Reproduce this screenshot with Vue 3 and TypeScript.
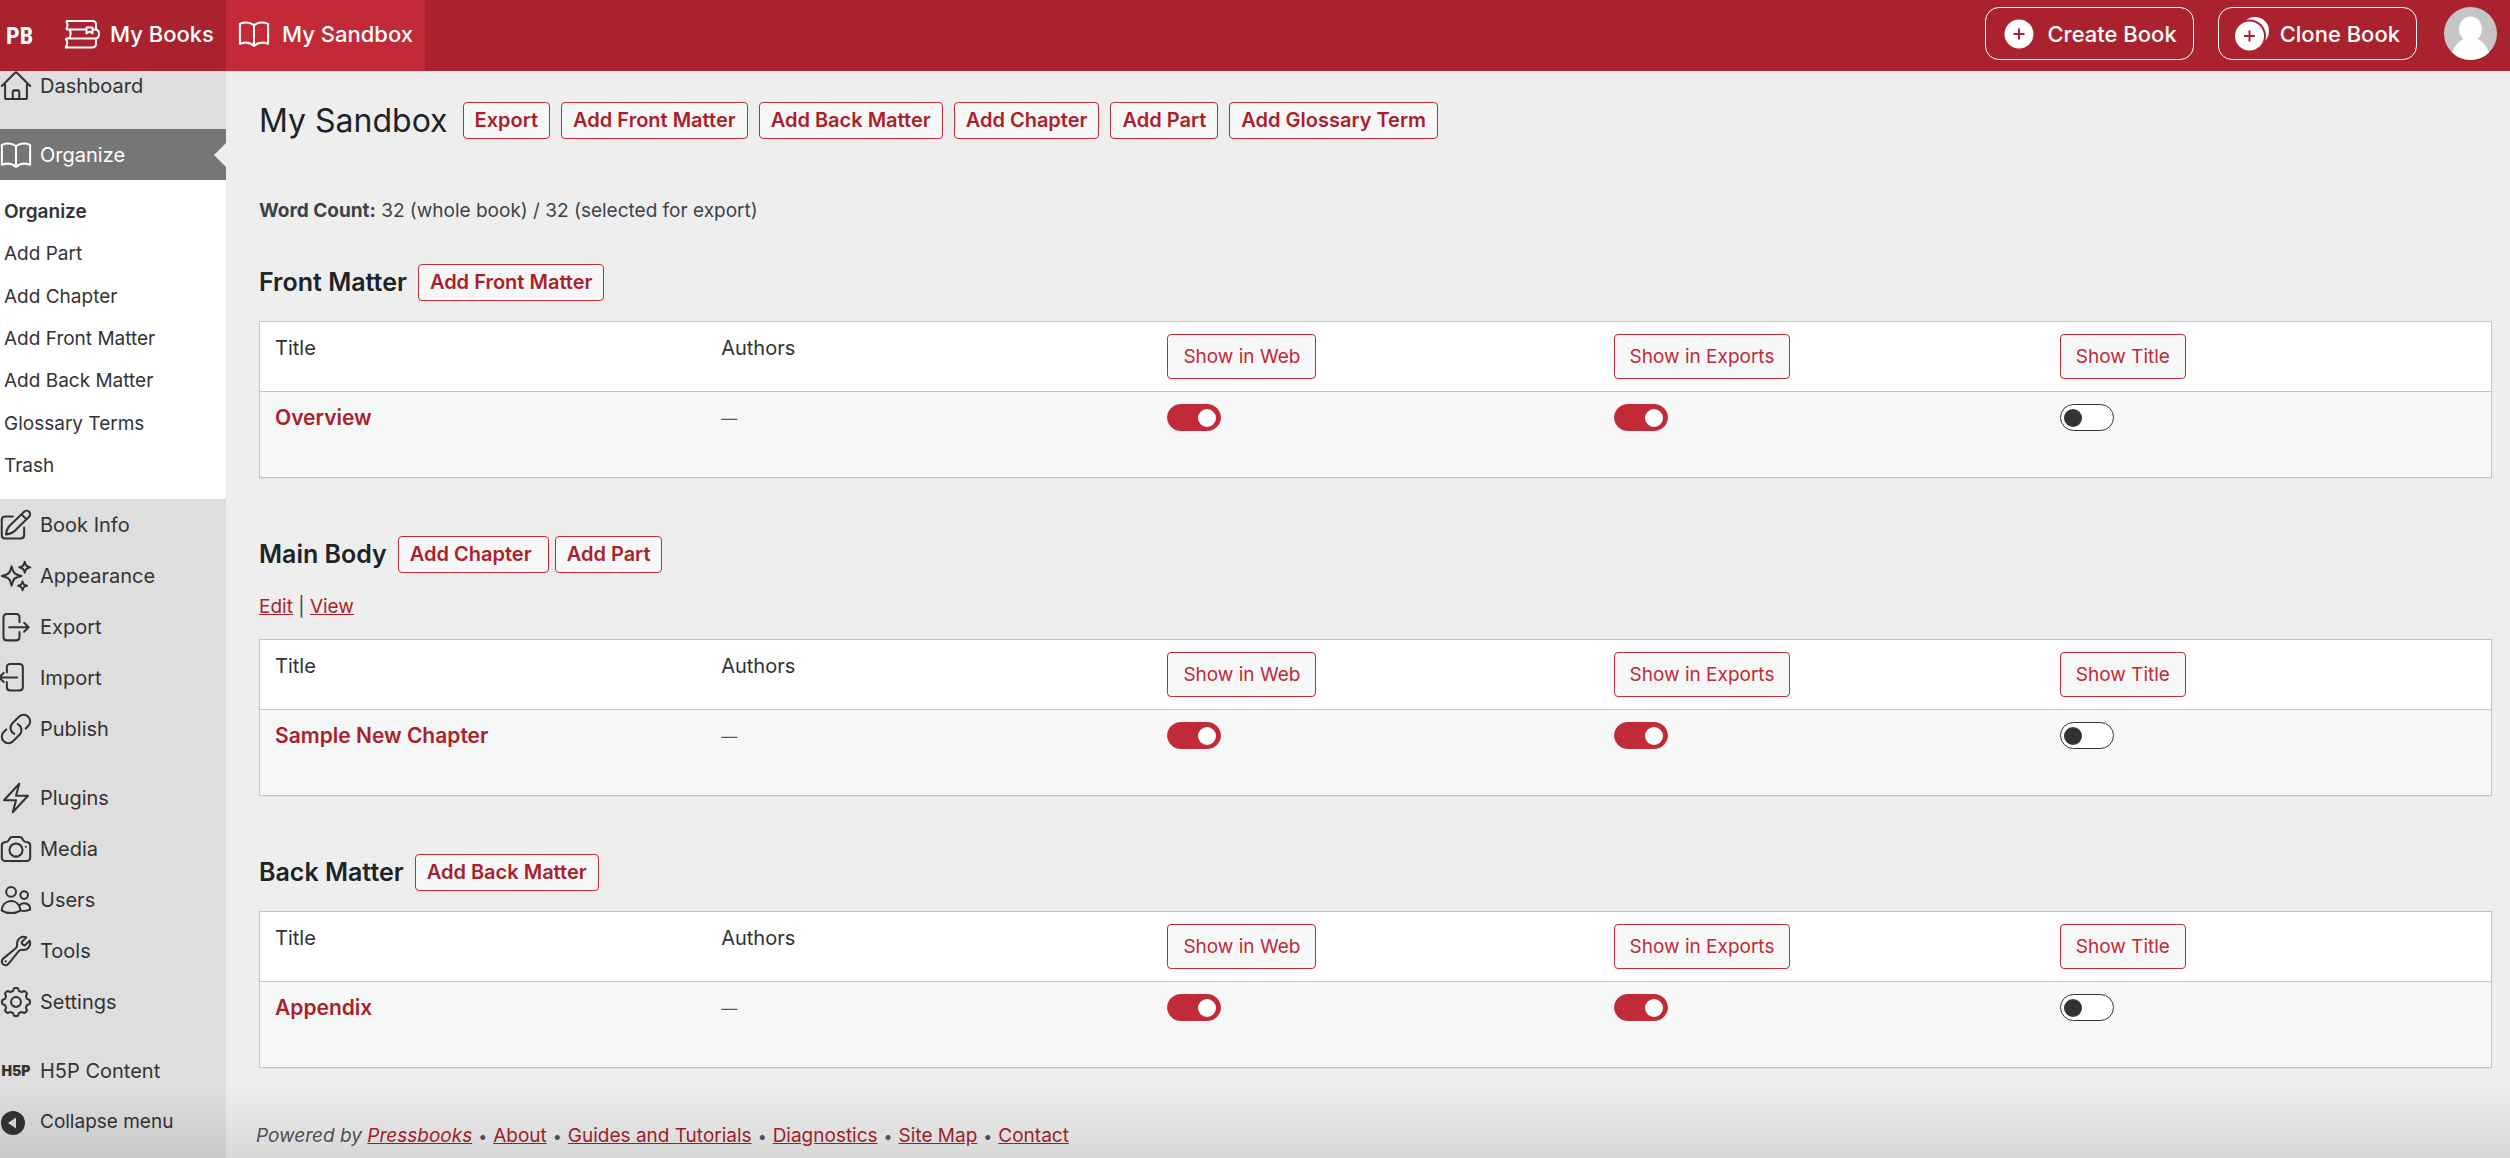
<script setup lang="ts">
import { reactive } from 'vue'

interface MenuItem {
  label: string
  icon: string
  gap?: boolean
  current?: boolean
}

interface Section {
  id: string
  heading: string
  actions: string[]
  partLinks?: boolean
  row: { title: string; web: boolean; exports: boolean; showTitle: boolean }
}

function gearPath(): string {
  const points: string[] = []
  for (let i = 0; i < 96; i++) {
    const angle = (i / 96) * Math.PI * 2
    const radius = 8.7 + 0.95 * Math.tanh(2.4 * Math.cos(8 * angle))
    points.push(`${(12 + radius * Math.sin(angle)).toFixed(2)} ${(12 - radius * Math.cos(angle)).toFixed(2)}`)
  }
  return `M${points.join('L')}Z M15.4 12a3.4 3.4 0 1 1-6.8 0 3.4 3.4 0 0 1 6.8 0Z`
}

const bookPath = 'M12 5.9V20.2M12 5.9C9.4 4 5.4 3.7 2.3 5V18.7C5.4 17.6 9.4 17.7 12 20.2C14.6 17.7 18.6 17.6 21.7 18.7V5C18.6 3.7 14.6 4 12 5.9Z'

const icons: Record<string, string> = {
  home: 'm2.25 12 8.954-8.955c.44-.439 1.152-.439 1.591 0L21.75 12M4.5 9.75v10.125c0 .621.504 1.125 1.125 1.125H9.75v-4.875c0-.621.504-1.125 1.125-1.125h2.25c.621 0 1.125.504 1.125 1.125V21h4.125c.621 0 1.125-.504 1.125-1.125V9.75M8.25 21h8.25',
  book: bookPath,
  edit: 'M9.8 6.2H4.6Q2.2 6.2 2.2 8.6V18.9Q2.2 21.3 4.6 21.3H15.2Q17.6 21.3 17.6 18.9V13.8M5.2 18.6C5.4 15.6 6.4 13.8 7.8 12.4L17.6 2.9a2.3 2.3 0 0 1 3.4 3.4L11.2 16C9.8 17.4 8 18.3 5.2 18.6ZM15.8 4.7l3.4 3.4',
  sparkles: 'M9.813 15.904 9 18.75l-.813-2.846a4.5 4.5 0 0 0-3.09-3.09L2.25 12l2.846-.813a4.5 4.5 0 0 0 3.09-3.09L9 5.25l.813 2.846a4.5 4.5 0 0 0 3.09 3.09L15.75 12l-2.846.813a4.5 4.5 0 0 0-3.09 3.09ZM18.259 8.715 18 9.75l-.259-1.035a3.375 3.375 0 0 0-2.455-2.456L14.25 6l1.036-.259a3.375 3.375 0 0 0 2.455-2.456L18 2.25l.259 1.035a3.375 3.375 0 0 0 2.456 2.456L21.75 6l-1.035.259a3.375 3.375 0 0 0-2.456 2.456ZM16.894 20.567 16.5 21.75l-.394-1.183a2.25 2.25 0 0 0-1.423-1.423L13.5 18.75l1.183-.394a2.25 2.25 0 0 0 1.423-1.423l.394-1.183.394 1.183a2.25 2.25 0 0 0 1.423 1.423l1.183.394-1.183.394a2.25 2.25 0 0 0-1.423 1.423Z',
  export: 'M14.4 8.8V5.4Q14.4 3 12 3H5.8Q3.4 3 3.4 5.4V18.8Q3.4 21.2 5.8 21.2H12Q14.4 21.2 14.4 18.8V15.4M7.3 12.2H20.7M17.6 9.1L20.7 12.2 17.6 15.3',
  import: 'M5.7 8.2V4.8Q5.7 2.4 8.1 2.4H14.3Q16.7 2.4 16.7 4.8V18.2Q16.7 20.6 14.3 20.6H8.1Q5.7 20.6 5.7 18.2V14.8M12.8 11.6H.4M3.5 8.5L.4 11.6 3.5 14.7',
  link: 'M13.19 8.688a4.5 4.5 0 0 1 1.242 7.244l-4.5 4.5a4.5 4.5 0 0 1-6.364-6.364l1.757-1.757m13.35-.622 1.757-1.757a4.5 4.5 0 0 0-6.364-6.364l-4.5 4.5a4.5 4.5 0 0 0 1.242 7.244',
  bolt: 'm3.75 13.5 10.5-11.25L12 10.5h8.25L9.75 21.75 12 13.5H3.75Z',
  camera: 'M6.827 6.175A2.31 2.31 0 0 1 5.186 7.23c-.38.054-.757.112-1.134.175C2.999 7.58 2.25 8.507 2.25 9.574V18a2.25 2.25 0 0 0 2.25 2.25h15A2.25 2.25 0 0 0 21.75 18V9.574c0-1.067-.75-1.994-1.802-2.169a47.865 47.865 0 0 0-1.134-.175 2.31 2.31 0 0 1-1.64-1.055l-.822-1.316a2.192 2.192 0 0 0-1.736-1.039 48.774 48.774 0 0 0-5.232 0 2.192 2.192 0 0 0-1.736 1.039l-.821 1.316ZM16.5 12.75a4.5 4.5 0 1 1-9 0 4.5 4.5 0 0 1 9 0ZM18.75 10.5h.008v.008h-.008V10.5Z',
  users: 'M15 19.128a9.38 9.38 0 0 0 2.625.372 9.337 9.337 0 0 0 4.121-.952 4.125 4.125 0 0 0-7.533-2.493M15 19.128v-.003c0-1.113-.285-2.16-.786-3.07M15 19.128v.106A12.318 12.318 0 0 1 8.624 21c-2.331 0-4.512-.645-6.374-1.766l-.001-.109a6.375 6.375 0 0 1 11.964-3.07M12 6.375a3.375 3.375 0 1 1-6.75 0 3.375 3.375 0 0 1 6.75 0Zm8.25 2.25a2.625 2.625 0 1 1-5.25 0 2.625 2.625 0 0 1 5.25 0Z',
  wrench: 'M21.75 6.75a4.5 4.5 0 0 1-4.884 4.484c-1.076-.091-2.264.071-2.95.904l-7.152 8.684a2.548 2.548 0 1 1-3.586-3.586l8.684-7.152c.833-.686.995-1.874.904-2.95a4.5 4.5 0 0 1 6.336-4.486l-3.276 3.276a3.004 3.004 0 0 0 2.25 2.25l3.276-3.276c.256.565.398 1.192.398 1.852ZM4.867 19.125h.008v.008h-.008v-.008Z',
  gear: gearPath()
}

const topItems: MenuItem[] = [
  { label: 'Dashboard', icon: 'home' },
  { label: 'Organize', icon: 'book', gap: true, current: true }
]

const submenu = ['Organize', 'Add Part', 'Add Chapter', 'Add Front Matter', 'Add Back Matter', 'Glossary Terms', 'Trash']

const bottomItems: MenuItem[] = [
  { label: 'Book Info', icon: 'edit' },
  { label: 'Appearance', icon: 'sparkles' },
  { label: 'Export', icon: 'export' },
  { label: 'Import', icon: 'import' },
  { label: 'Publish', icon: 'link' },
  { label: 'Plugins', icon: 'bolt', gap: true },
  { label: 'Media', icon: 'camera' },
  { label: 'Users', icon: 'users' },
  { label: 'Tools', icon: 'wrench' },
  { label: 'Settings', icon: 'gear' }
]

const pageActions = ['Export', 'Add Front Matter', 'Add Back Matter', 'Add Chapter', 'Add Part', 'Add Glossary Term']

const sections = reactive<Section[]>([
  { id: 'front', heading: 'Front Matter', actions: ['Add Front Matter'], row: { title: 'Overview', web: true, exports: true, showTitle: false } },
  { id: 'main', heading: 'Main Body', actions: ['Add Chapter ', 'Add Part'], partLinks: true, row: { title: 'Sample New Chapter', web: true, exports: true, showTitle: false } },
  { id: 'back', heading: 'Back Matter', actions: ['Add Back Matter'], row: { title: 'Appendix', web: true, exports: true, showTitle: false } }
])

const footerLinks = ['About', 'Guides and Tutorials', 'Diagnostics', 'Site Map', 'Contact']
</script>

<template>
  <div class="app">
    <header class="topbar">
      <a class="logo" href="#" aria-label="Pressbooks">PB</a>
      <a class="tab books" href="#">
        <svg class="books-icon" viewBox="0 0 36 30" aria-hidden="true">
          <path d="M2 2H28.5Q32 2 32 5.5V10M2 2Q5 6 2 10.5M2 10.5H22M5.5 10.5Q8 15 5 19.5M28.5 10.5H31Q35 10.5 35 15T31 19.5H1.5M1.5 19.5Q5 24 1.5 28.5M1 28.5H28Q32 28.5 32 24.5V20" />
          <path d="M22.5 8.5H28.5V14.5L25.5 12.5 22.5 14.5Z" />
        </svg>
        My Books
      </a>
      <a class="tab active" href="#">
        <svg class="icon" viewBox="1 1 22 22" aria-hidden="true"><path :d="bookPath" /></svg>
        My Sandbox
      </a>
      <div class="top-actions">
        <button class="pill" type="button">
          <svg class="plus-icon" viewBox="0 0 34 36" aria-hidden="true">
            <circle cx="17" cy="18" r="14.5" fill="#fff" />
            <path d="M17 12.5V23.5M11.5 18H22.5" stroke="#ab222f" stroke-width="2" />
          </svg>
          Create Book
        </button>
        <button class="pill" type="button">
          <svg class="plus-icon" viewBox="0 0 34 36" aria-hidden="true">
            <circle cx="20" cy="15" r="14" fill="#fff" />
            <circle cx="14.5" cy="20" r="16.5" fill="#ab222f" />
            <circle cx="14.5" cy="20" r="14.5" fill="#fff" />
            <path d="M14.5 14.5V25.5M9 20H20" stroke="#ab222f" stroke-width="2" />
          </svg>
          Clone Book
        </button>
        <a class="avatar" href="#" aria-label="Profile">
          <svg viewBox="0 0 53 53" aria-hidden="true">
            <circle cx="26.5" cy="26.5" r="26.5" fill="#c5c5c5" />
            <ellipse cx="26.5" cy="22" rx="11.5" ry="12.5" fill="#fff" />
            <path d="M8 45.5C11 38 15 34 20 31.5H33C38 34 42 38 45 45.5A26.5 26.5 0 0 1 8 45.5Z" fill="#fff" />
          </svg>
        </a>
      </div>
    </header>

    <div class="body">
      <nav class="sidebar" aria-label="Main menu">
        <a v-for="item in topItems" :key="item.label" href="#" class="menu-item" :class="{ gap: item.gap, current: item.current }">
          <svg class="icon" viewBox="1 1 22 22" aria-hidden="true"><path :d="icons[item.icon]" /></svg>
          {{ item.label }}
        </a>
        <ul class="submenu">
          <li v-for="(label, i) in submenu" :key="label">
            <a href="#" :class="{ selected: i === 0 }">{{ label }}</a>
          </li>
        </ul>
        <a v-for="item in bottomItems" :key="item.label" href="#" class="menu-item" :class="{ gap: item.gap }">
          <svg class="icon" viewBox="1 1 22 22" aria-hidden="true"><path :d="icons[item.icon]" /></svg>
          {{ item.label }}
        </a>
        <a href="#" class="menu-item gap"><span class="h5p" aria-hidden="true">H5P</span>H5P Content</a>
        <button type="button" class="menu-item collapse">
          <svg class="collapse-icon" viewBox="0 0 32 32" aria-hidden="true">
            <circle cx="13" cy="17" r="12" fill="#333" />
            <path d="M16 11.5V22.5L8 17Z" fill="#dedede" />
          </svg>
          Collapse menu
        </button>
      </nav>

      <main class="content">
        <div class="title-row">
          <h1>My Sandbox</h1>
          <a v-for="label in pageActions" :key="label" href="#" class="action">{{ label }}</a>
        </div>
        <p class="count"><strong>Word Count:</strong> 32 (whole book) / 32 (selected for export)</p>

        <section v-for="section in sections" :key="section.id" class="section">
          <div class="section-head">
            <h2>{{ section.heading }}</h2>
            <div class="section-actions">
              <a v-for="label in section.actions" :key="label" href="#" class="action">{{ label }}</a>
            </div>
          </div>
          <p v-if="section.partLinks" class="part-links"><a href="#">Edit</a> | <a href="#">View</a></p>
          <table>
            <thead>
              <tr>
                <th scope="col">Title</th>
                <th scope="col">Authors</th>
                <th scope="col"><button type="button">Show in Web</button></th>
                <th scope="col"><button type="button">Show in Exports</button></th>
                <th scope="col"><button type="button">Show Title</button></th>
              </tr>
            </thead>
            <tbody>
              <tr>
                <td><a href="#" class="row-title">{{ section.row.title }}</a></td>
                <td class="no-author">—</td>
                <td><input v-model="section.row.web" type="checkbox" :aria-label="`Show ${section.row.title} in web`" /></td>
                <td><input v-model="section.row.exports" type="checkbox" :aria-label="`Show ${section.row.title} in exports`" /></td>
                <td><input v-model="section.row.showTitle" type="checkbox" :aria-label="`Show title of ${section.row.title}`" /></td>
              </tr>
            </tbody>
          </table>
        </section>

        <footer class="footer">
          <em>Powered by <a href="#">Pressbooks</a></em>
          <template v-for="label in footerLinks" :key="label"><span class="dot">•</span><a href="#">{{ label }}</a></template>
        </footer>
      </main>
    </div>
    <div class="shade" aria-hidden="true"></div>
  </div>
</template>

<style>
body {
  background: #eee;
}
</style>

<style scoped>
.app,
.app * {
  box-sizing: border-box;
}

.app {
  display: flex;
  flex-direction: column;
  min-height: 100vh;
  font-family: Inter, "Liberation Sans", sans-serif;
  font-size: 19px;
  line-height: 28px;
  color: #3c434a;
}

a {
  color: #ab1f2c;
}

button {
  font: inherit;
  cursor: pointer;
}

svg {
  flex: none;
  display: block;
}

.topbar {
  position: relative;
  z-index: 1;
  display: flex;
  align-items: stretch;
  height: 71px;
  padding-right: 13px;
  background: #ab222f;
  color: #fff;
  font-size: 22px;
  font-weight: 500;
}

.topbar a {
  color: #fff;
  text-decoration: none;
}

.logo {
  display: flex;
  align-items: center;
  width: 50px;
  padding-left: 6px;
  font-family: "Liberation Sans Narrow", "Roboto Condensed", "Liberation Sans", sans-serif;
  font-size: 24px;
  font-weight: 700;
}

.tab {
  display: flex;
  align-items: center;
  gap: 12px;
  padding: 0 12px;
  padding-bottom: 4px;
}

.books {
  width: 176px;
  gap: 10px;
  padding-left: 14px;
  white-space: nowrap;
}

.books-icon {
  width: 36px;
  height: 30px;
  fill: none;
  stroke: #fff;
  stroke-width: 2;
  stroke-linejoin: round;
}

.tab.active {
  background: #c12a36;
}

.icon {
  width: 32px;
  height: 32px;
  fill: none;
  stroke: currentColor;
  stroke-width: 1.4;
  stroke-linecap: round;
  stroke-linejoin: round;
}

.top-actions {
  display: flex;
  align-items: flex-start;
  gap: 24px;
  margin-left: auto;
  padding-top: 7px;
}

.pill {
  display: flex;
  align-items: center;
  gap: 11px;
  height: 53px;
  padding: 0 16px;
  border: 1px solid #fff;
  border-radius: 14px;
  background: none;
  color: #fff;
}

.plus-icon {
  width: 34px;
  height: 36px;
  fill: none;
}

.avatar {
  width: 53px;
  height: 53px;
  margin-left: 3px;
}

.body {
  display: flex;
  flex: 1;
}

.sidebar {
  flex: none;
  width: 226px;
  margin-top: -11px;
  background: #dedede;
}

.menu-item {
  display: flex;
  align-items: center;
  gap: 8px;
  width: 100%;
  height: 51px;
  padding: 0;
  border: 0;
  background: none;
  font-size: 20px;
  color: #333;
  text-decoration: none;
}

.menu-item.gap {
  margin-top: 18px;
}

.menu-item.current {
  position: relative;
  background: #767676;
  color: #fff;
}

.menu-item.current::after {
  content: "";
  position: absolute;
  right: 0;
  top: 14px;
  border: 12px solid transparent;
  border-left-width: 0;
  border-right-color: #eee;
}

.menu-item.collapse {
  font-size: 19px;
}

.collapse-icon {
  width: 32px;
  height: 32px;
}

.h5p {
  width: 32px;
  font-size: 14px;
  font-weight: 900;
  text-align: center;
}

.submenu {
  display: flex;
  flex-direction: column;
  justify-content: space-between;
  height: 319px;
  margin: 0;
  padding: 18px 4px 19px;
  background: #fff;
  list-style: none;
}

.submenu a {
  display: block;
  color: #333;
  text-decoration: none;
}

.submenu .selected {
  font-weight: 600;
}

.content {
  flex: 1;
  min-width: 0;
  padding: 31px 18px 0 33px;
}

.title-row {
  display: flex;
  align-items: center;
  gap: 11px;
}

h1 {
  margin: 0 4px 0 0;
  font-size: 32px;
  font-weight: 400;
  line-height: 37px;
  color: #1d2327;
}

.action {
  display: block;
  height: 37px;
  padding: 0 11px;
  border: 1px solid #c12a36;
  border-radius: 4px;
  background: #f6f7f7;
  font-size: 20px;
  font-weight: 600;
  line-height: 35px;
  text-decoration: none;
  white-space: pre;
}

.count {
  margin: 58px 0 0;
}

.section {
  padding-top: 58px;
}

.section:first-of-type {
  padding-top: 39px;
}

.section-head {
  display: flex;
  align-items: center;
  gap: 11px;
}

.section-actions {
  display: flex;
  gap: 6px;
}

h2 {
  margin: 0;
  font-size: 25px;
  font-weight: 600;
  line-height: 37px;
  color: #1d2327;
}

.part-links {
  margin: 20px 0 -2px;
}

table {
  width: 100%;
  height: 157px;
  margin-top: 20px;
  table-layout: fixed;
  border: 1px solid #c3c4c7;
  border-spacing: 0;
  background: #fff;
  box-shadow: 0 1px 1px rgba(0, 0, 0, 0.04);
}

th {
  height: 70px;
  padding: 12px 15px;
  border-bottom: 1px solid #c3c4c7;
  font-size: 20px;
  font-weight: 400;
  text-align: left;
  vertical-align: top;
  color: #2c3338;
}

th button {
  display: block;
  height: 45px;
  padding: 0 15px;
  border: 1px solid #c12a36;
  border-radius: 4px;
  background: #f6f7f7;
  font-size: 19px;
  color: #c12a36;
}

td {
  padding: 12px 15px;
  background: #f6f7f7;
  vertical-align: top;
  color: #50575e;
}

.row-title {
  font-size: 21px;
  font-weight: 600;
  text-decoration: none;
}

.no-author {
  font-size: 16px;
}

input[type="checkbox"] {
  appearance: none;
  display: flex;
  align-items: center;
  width: 54px;
  height: 27px;
  margin: 0;
  padding: 0 4px 0 3px;
  border: 1px solid #333;
  border-radius: 14px;
  background: #fff;
}

input[type="checkbox"]::before {
  content: "";
  width: 18px;
  height: 18px;
  border-radius: 50%;
  background: #333;
}

input[type="checkbox"]:checked {
  justify-content: flex-end;
  border-color: #c12a36;
  background: #c12a36;
}

input[type="checkbox"]:checked::before {
  background: #fff;
}

.footer {
  margin: 54px 0 0 -3px;
  color: #50575e;
}

.dot {
  margin: 0 6px;
  font-size: 16px;
}

.shade {
  position: fixed;
  inset: auto 0 0;
  height: 74px;
  background: linear-gradient(transparent, rgba(0, 0, 0, 0.09));
  pointer-events: none;
}
</style>
